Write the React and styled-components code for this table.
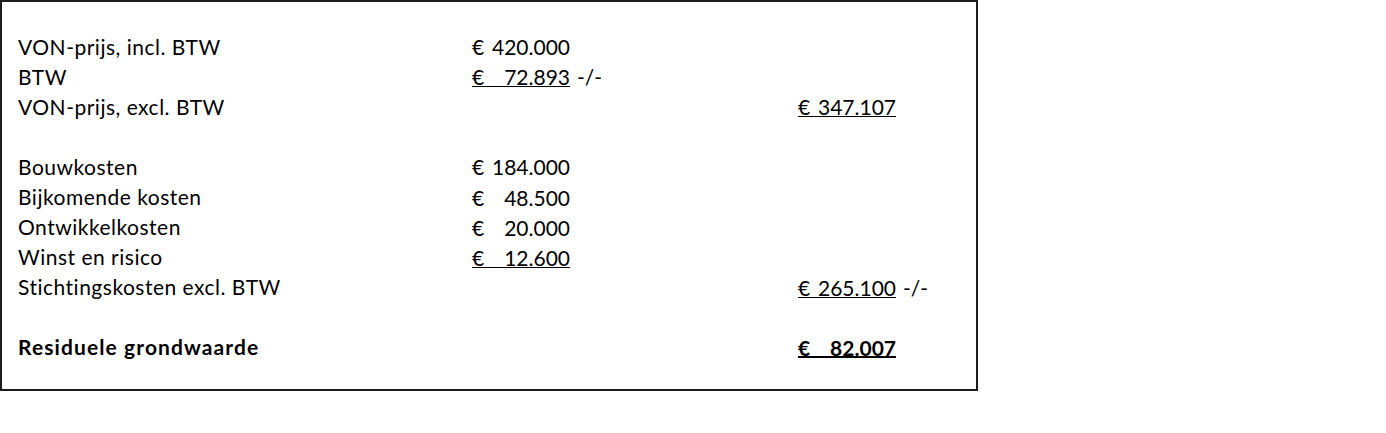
import React from "react";
import styled, { createGlobalStyle } from "styled-components";

const Global = createGlobalStyle`
  html, body { margin: 0; padding: 0; background: #fff; }
  body { font-family: Lato, "Liberation Sans", sans-serif; color: #000; }
`;

const Frame = styled.div`
  box-sizing: border-box;
  width: 978px;
  height: 391px;
  border: 2px solid #1c1c1c;
  padding: 29px 0 0 16px;
`;

const Table = styled.div`
  display: grid;
  grid-template-columns: 454px 326px auto;
  grid-auto-rows: 30.1px;
  align-items: center;
  font-size: 21px;
  line-height: 1;
`;

const Label = styled.div`
  font-weight: ${(p) => (p.$bold ? 700 : 400)};
  letter-spacing: ${(p) => (p.$bold ? "1.1px" : "0.5px")};
  white-space: nowrap;
`;

const Cell = styled.div`
  display: flex;
  align-items: center;
  gap: 7px;
  white-space: nowrap;
`;

const Amount = styled.span`
  box-sizing: border-box;
  display: inline-flex;
  justify-content: space-between;
  width: 98px;
  height: 22px;
  padding-top: 1px;
  font-weight: ${(p) => (p.$bold ? 700 : 400)};
  border-bottom: ${(p) =>
    p.$under ? `${p.$bold ? 2 : 1.5}px solid #000` : "1.5px solid transparent"};
`;

const Minus = styled.span`
  height: 22px;
  padding-top: 1px;
  box-sizing: border-box;
`;

const Blank = styled.div`
  grid-column: 1 / -1;
`;

function Money({ value, under, bold }) {
  return (
    <Amount $under={under} $bold={bold}>
      <span>€</span>
      <span>{value}</span>
    </Amount>
  );
}

const rows = [
  { label: "VON-prijs, incl. BTW", a: { v: "420.000" } },
  { label: "BTW", a: { v: "72.893", u: true, minus: true } },
  { label: "VON-prijs, excl. BTW", b: { v: "347.107", u: true } },
  null,
  { label: "Bouwkosten", a: { v: "184.000" } },
  { label: "Bijkomende kosten", a: { v: "48.500" } },
  { label: "Ontwikkelkosten", a: { v: "20.000" } },
  { label: "Winst en risico", a: { v: "12.600", u: true } },
  { label: "Stichtingskosten excl. BTW", b: { v: "265.100", u: true, minus: true } },
  null,
  { label: "Residuele grondwaarde", bold: true, b: { v: "82.007", u: true } },
];

function AmountCell({ d, bold }) {
  if (!d) return <Cell />;
  return (
    <Cell>
      <Money value={d.v} under={d.u} bold={bold} />
      {d.minus && <Minus>-/-</Minus>}
    </Cell>
  );
}

export default function App() {
  return (
    <>
      <Global />
      <Frame>
        <Table>
          {rows.map((r, i) =>
            r ? (
              <React.Fragment key={i}>
                <Label $bold={r.bold}>{r.label}</Label>
                <AmountCell d={r.a} bold={r.bold} />
                <AmountCell d={r.b} bold={r.bold} />
              </React.Fragment>
            ) : (
              <Blank key={i} />
            )
          )}
        </Table>
      </Frame>
    </>
  );
}
